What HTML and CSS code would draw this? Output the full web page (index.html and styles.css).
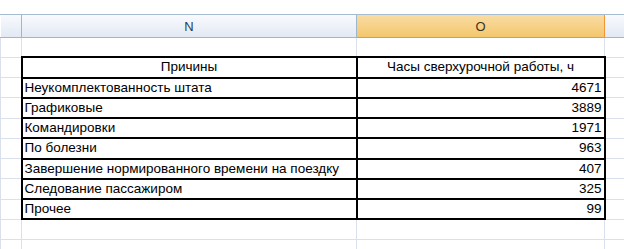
FILE: index.html
```html
<!DOCTYPE html>
<html lang="ru">
<head>
<meta charset="utf-8">
<link rel="stylesheet" href="styles.css">
</head>
<body>
<div class="sheet">
  <div class="topbar"></div>
  <table class="grid">
    <colgroup><col class="c-m"><col class="c-n"><col class="c-o"><col class="c-p"></colgroup>
    <thead>
      <tr class="hdr"><th></th><th>N</th><th class="sel">O</th><th></th></tr>
    </thead>
    <tbody>
      <tr class="r"><td></td><td></td><td></td><td></td></tr>
      <tr class="r"><td></td><td class="d ctr">Причины</td><td class="d ctr">Часы сверхурочной работы, ч</td><td></td></tr>
      <tr class="r"><td></td><td class="d">Неукомплектованность штата</td><td class="d num">4671</td><td></td></tr>
      <tr class="r"><td></td><td class="d">Графиковые</td><td class="d num">3889</td><td></td></tr>
      <tr class="r"><td></td><td class="d">Командировки</td><td class="d num">1971</td><td></td></tr>
      <tr class="r"><td></td><td class="d">По болезни</td><td class="d num">963</td><td></td></tr>
      <tr class="r"><td></td><td class="d">Завершение нормированного времени на поездку</td><td class="d num">407</td><td></td></tr>
      <tr class="r"><td></td><td class="d">Следование пассажиром</td><td class="d num">325</td><td></td></tr>
      <tr class="r"><td></td><td class="d">Прочее</td><td class="d num">99</td><td></td></tr>
      <tr class="r"><td></td><td></td><td></td><td></td></tr>
      <tr class="r"><td></td><td></td><td></td><td></td></tr>
    </tbody>
  </table>
</div>
</body>
</html>
```

FILE: styles.css
```css
html, body {
  margin: 0;
  padding: 0;
  background: #fff;
}
.sheet {
  width: 624px;
  height: 249px;
  overflow: hidden;
  font-family: "Liberation Sans", Arial, sans-serif;
  font-size: 13.5px;
  color: #000;
}
.topbar {
  height: 14px;
  border-bottom: 1px solid #a7bad4;
}
.grid {
  border-collapse: collapse;
  table-layout: fixed;
  width: 660px;
}
.c-m { width: 21px; }
.c-n { width: 335px; }
.c-o { width: 248px; }
.c-p { width: 56px; }
.hdr th {
  height: 22px;
  padding: 0;
  font-weight: normal;
  font-size: 13px;
  color: #2f3a4a;
  text-align: center;
  background: linear-gradient(#f8fafd, #e2e9f3);
  border-right: 1px solid #9eb6ce;
  border-bottom: 1px solid #9eb6ce;
}
.hdr th.sel {
  background: linear-gradient(#f9dca4, #f3c66c);
  border-bottom: 1px solid #f29536;
  border-right: 1px solid #f29536;
  color: #3b3320;
}
.r td {
  height: 18.25px;
  padding: 0 3px;
  border: 1px solid #dae0ec;
  white-space: nowrap;
  overflow: hidden;
  line-height: 16px;
}
.r td.d {
  border: 2px solid #000;
  padding: 0 2px;
}
.r td.ctr { text-align: center; }
.r td.num { text-align: right; }
```
